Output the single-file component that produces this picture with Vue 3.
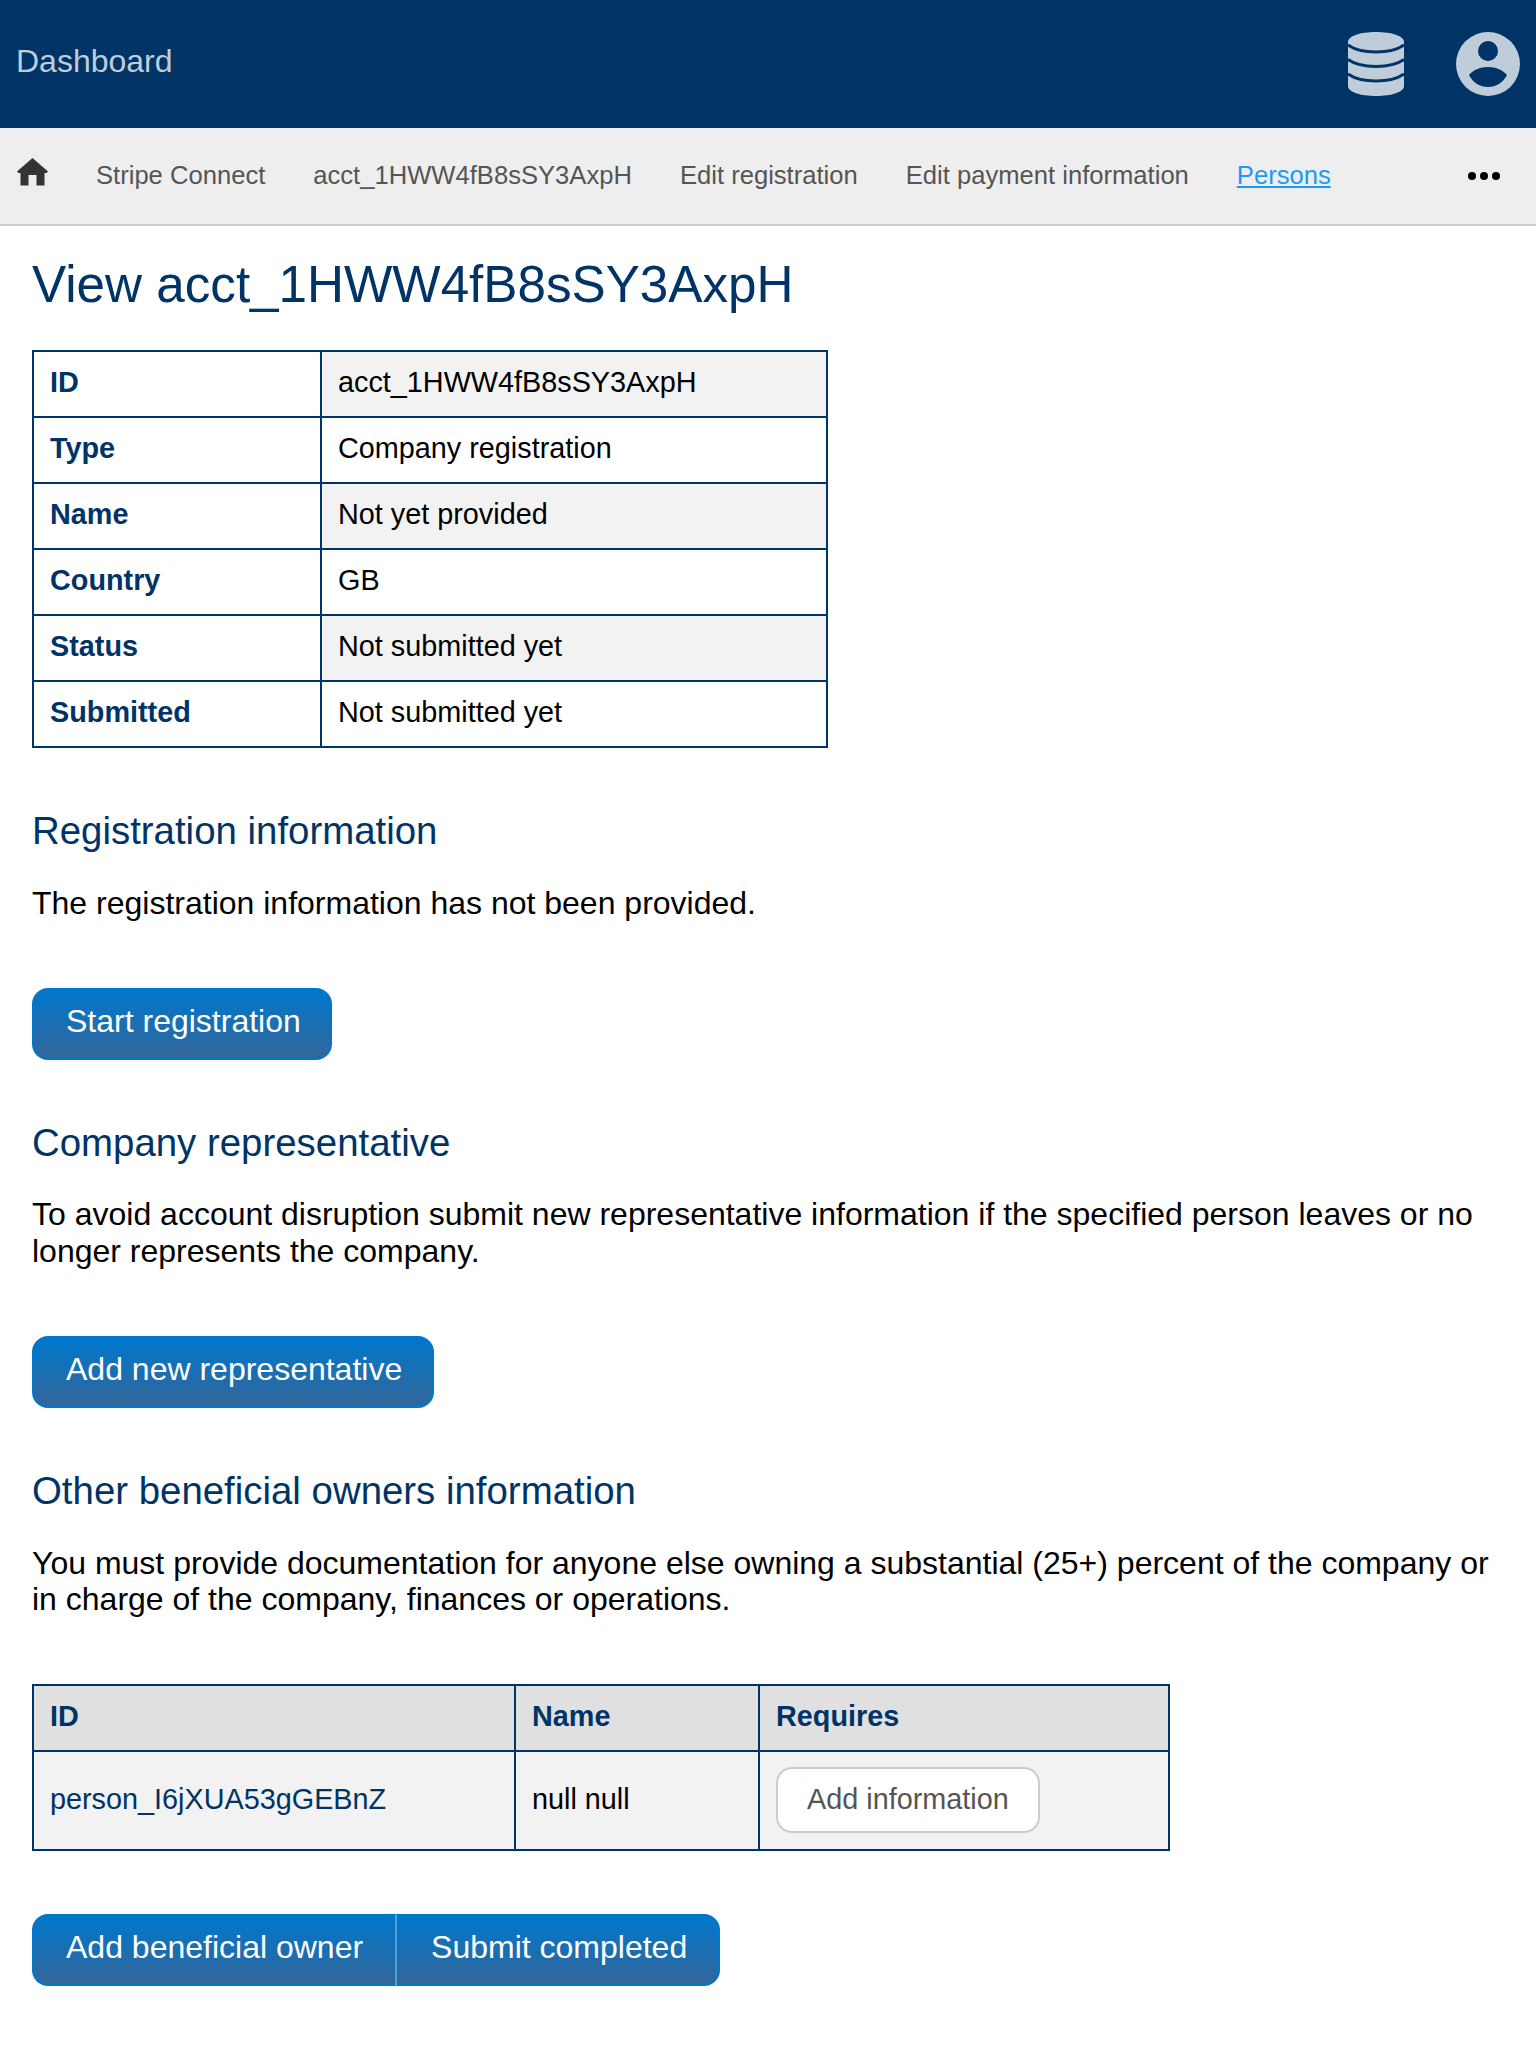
<template>
  <div class="page">
    <header class="topbar">
      <a class="brand">Dashboard</a>
      <div class="topbar-icons">
        <svg class="ico-db" viewBox="0 0 56 64" width="56" height="64">
          <path class="ico-fill" d="M0 10C0 4 12 0 28 0s28 4 28 10v44c0 6-12 10-28 10S0 60 0 54Z" />
          <path class="ico-cut" d="M0 13c6 4.500 16 7 28 7s22-2.500 28-7M0 27.500c6 4.500 16 7 28 7s22-2.500 28-7M0 42c6 4.500 16 7 28 7s22-2.500 28-7" />
        </svg>
        <svg class="ico-user" viewBox="0 0 64 64" width="64" height="64">
          <path class="ico-fill" fill-rule="evenodd" d="M32 0a32 32 0 1 1 0 64a32 32 0 1 1 0-64ZM32 9a10 10 0 1 0 0 20a10 10 0 1 0 0-20ZM13 43c4-5 11-8 19-8s15 3 19 8c-4 8-11 12-19 12s-15-4-19-12Z" />
        </svg>
      </div>
    </header>

    <nav class="subnav">
      <svg class="ico-home" viewBox="0 0 31 28" width="31" height="28">
        <path d="M15.500 0 31 13.500 29.500 15H27.500v12.500h-8v-10.500h-8v10.500h-8V15H1.500L0 13.500Z" />
      </svg>
      <a v-for="l in navLinks" :key="l" class="subnav-link">{{ l }}</a>
      <a class="subnav-link active">Persons</a>
      <svg class="ico-more" viewBox="0 0 32 8" width="32" height="8">
        <circle cx="4" cy="4" r="4" /><circle cx="16" cy="4" r="4" /><circle cx="28" cy="4" r="4" />
      </svg>
    </nav>

    <main class="content">
      <h1>View acct_1HWW4fB8sSY3AxpH</h1>

      <table class="info-table">
        <tbody>
          <tr v-for="r in accountRows" :key="r[0]">
            <th>{{ r[0] }}</th>
            <td>{{ r[1] }}</td>
          </tr>
        </tbody>
      </table>

      <h2>Registration information</h2>
      <p>The registration information has not been provided.</p>
      <div class="btn-row"><a class="btn">Start registration</a></div>

      <h2>Company representative</h2>
      <p>To avoid account disruption submit new representative information if the specified person leaves or no longer represents the company.</p>
      <div class="btn-row"><a class="btn">Add new representative</a></div>

      <h2>Other beneficial owners information</h2>
      <p>You must provide documentation for anyone else owning a substantial (25+) percent of the company or in charge of the company, finances or operations.</p>

      <table class="owners-table">
        <thead>
          <tr>
            <th class="col-id">ID</th>
            <th class="col-name">Name</th>
            <th>Requires</th>
          </tr>
        </thead>
        <tbody>
          <tr>
            <td><a class="person-link">person_I6jXUA53gGEBnZ</a></td>
            <td>null null</td>
            <td><a class="btn-light">Add information</a></td>
          </tr>
        </tbody>
      </table>

      <div class="btn-group">
        <a class="btn">Add beneficial owner</a>
        <a class="btn">Submit completed</a>
      </div>
    </main>
  </div>
</template>

<script setup>
const navLinks = ['Stripe Connect', 'acct_1HWW4fB8sSY3AxpH', 'Edit registration', 'Edit payment information']

const accountRows = [
  ['ID', 'acct_1HWW4fB8sSY3AxpH'],
  ['Type', 'Company registration'],
  ['Name', 'Not yet provided'],
  ['Country', 'GB'],
  ['Status', 'Not submitted yet'],
  ['Submitted', 'Not submitted yet'],
]
</script>

<style>
html, body { background: #fff; }
</style>

<style scoped>
.page {
  font-family: "Liberation Sans", Arial, sans-serif;
  font-size: 32px;
  color: #000;
  min-height: 2048px;
}

.topbar {
  display: flex;
  align-items: center;
  justify-content: space-between;
  height: 128px;
  padding: 0 16px;
  box-sizing: border-box;
  background: #003366;
}
.brand { font-size: 32px; color: #bfccd9; margin-top: -6px; }
.topbar-icons { display: flex; align-items: center; gap: 52px; }
.ico-fill { fill: #bfccd9; }
.ico-cut { fill: none; stroke: #003366; stroke-width: 3; }

.subnav {
  display: flex;
  align-items: center;
  gap: 48px;
  height: 98px;
  box-sizing: border-box;
  padding: 0 36px 0 17px;
  background: #eee;
  border-bottom: 2px solid #ccc;
  font-size: 25.6px;
}
.ico-home { fill: #333; margin-top: -8px; }
.subnav-link { color: #555; margin-top: -2px; }
.subnav-link.active { color: #1a9bfc; text-decoration: underline; }
.ico-more { fill: #000; margin-left: auto; }

.content { padding: 0 32px; }

h1 {
  margin: 28px 0 35px;
  font-size: 51.2px;
  font-weight: 400;
  line-height: 1.2;
  color: #003366;
}
h2 {
  margin: 0;
  font-size: 38.4px;
  font-weight: 400;
  line-height: 1.2;
  color: #003366;
}
p {
  margin: 30.4px 0 0;
  font-size: 32px;
  line-height: 36.8px;
}

table { border-collapse: collapse; font-size: 28.8px; }
th, td {
  border: 2px solid #003366;
  padding: 0 16px;
  text-align: left;
  height: 66px;
  box-sizing: border-box;
}
th { color: #003366; }

.info-table { width: 796px; margin-bottom: 60px; }
.info-table th { width: 288px; }
.info-table th, .info-table td { padding-bottom: 3px; }
.info-table tr:nth-child(odd) td { background: #f2f2f2; }

.owners-table { width: 1138px; margin-top: 65.4px; }
.owners-table thead th { background: #e0e0e0; padding-bottom: 2px; }
.owners-table tbody td { background: #f2f2f2; height: 99px; padding-bottom: 1px; }
.col-id { width: 482px; }
.col-name { width: 244px; }
.person-link { color: #003366; }

.btn-light {
  display: inline-block;
  padding: 0 29px 2px;
  line-height: 60px;
  color: #555;
  background: #fff;
  border: 2px solid #ccc;
  border-radius: 16px;
}

.btn-row { margin: 66.2px 0 60px; display: flex; }
.btn {
  display: inline-block;
  padding: 0 29.5px 5px 32px;
  line-height: 63px;
  color: #fff;
  font-size: 32px;
  background: linear-gradient(#0077cc, #336699);
  border: 2px solid #0077cc;
  border-radius: 16px;
}
.btn-group { display: flex; margin-top: 63px; }
.btn-group .btn:first-child { padding-right: 32px; border-radius: 16px 0 0 16px; border-right: 1px solid #4c9fe0; }
.btn-group .btn:last-child { padding: 0 31px 5px 34px; border-radius: 0 16px 16px 0; border-left: 1px solid #4c9fe0; }
</style>
